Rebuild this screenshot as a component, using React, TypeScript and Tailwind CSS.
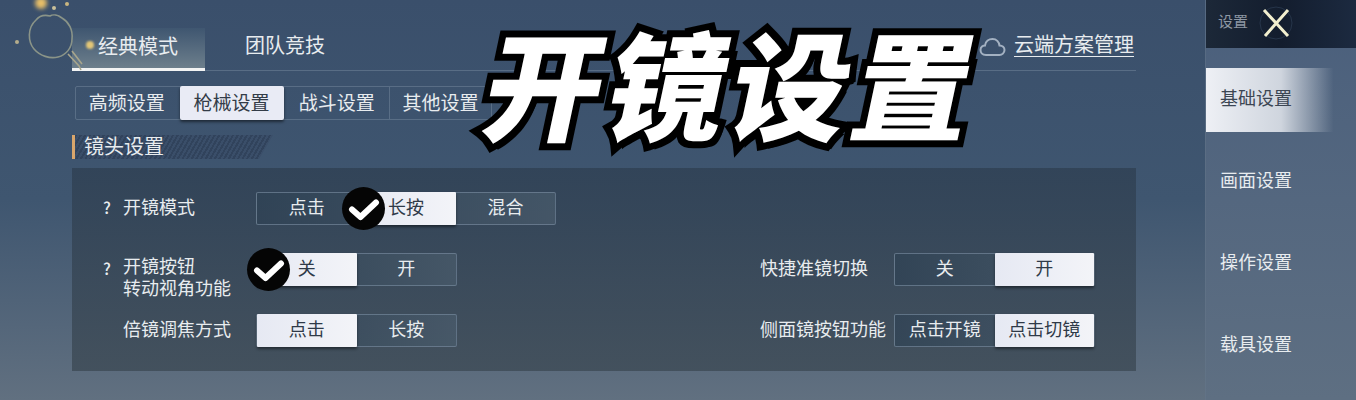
import React from "react";

const font = { fontFamily: '"Noto Sans CJK SC", "Noto Sans", sans-serif' };

function Seg({ items, active, w = 99.5 }: { items: string[]; active: number; w?: number }) {
  return (
    <div className="flex h-[33px] rounded-[2px] border border-[#73869a]/70 bg-gradient-to-r from-[#2f4254]/70 to-[#4a5c6c]/70">
      {items.map((t, i) => (
        <div
          key={t}
          style={{ width: w }}
          className={
            "flex items-center justify-center pb-[5px] text-[18px] leading-none " +
            (i === active
              ? "-my-px bg-gradient-to-r from-[#e6e9f3] to-[#f3f4f8] text-[#2f3a48] rounded-[1px] shadow-[0_2px_3px_rgba(0,0,0,0.45)]"
              : "text-[#e8ecef]")
          }
        >
          {t}
        </div>
      ))}
    </div>
  );
}

function Check({ className }: { className: string }) {
  return (
    <div className={"absolute flex h-[43px] w-[43px] items-center justify-center rounded-full bg-[#050505] " + className}>
      <svg width="32" height="32" viewBox="0 0 32 32" fill="none">
        <path d="M4 16.5 L12.5 24 L28 9.5" stroke="#fff" strokeWidth="6" strokeLinejoin="round" strokeLinecap="round" />
      </svg>
    </div>
  );
}

function Dot({ className }: { className: string }) {
  return <div className={"absolute rounded-full " + className} />;
}

function Help() {
  return <span className="w-[51px] pb-[3px] pl-[31px] text-[16px] font-medium">?</span>;
}

export default function App() {
  return (
    <div
      style={font}
      className="relative flex h-[400px] w-[1356px] overflow-hidden bg-gradient-to-b from-[#3a4f6b] via-[#3f5670] to-[#617080]"
    >
      {/* magnifier decoration and sparkles */}
      <svg className="absolute left-[26px] top-[12px] z-10" width="60" height="62" viewBox="0 0 60 62" fill="none">
        <path
          d="M10 8 C14 3 20 3 24 4 C27 2 32 3 36 6 C43 10 47 18 46 27 C46 36 40 43 32 45 C24 47 14 44 8 37 C2 30 1 16 10 8 Z"
          stroke="#8a9488"
          strokeWidth="1.6"
        />
        <path d="M42 42 L53 54 L55 58 M46 39 L56 52" stroke="#a8a58c" strokeWidth="1.6" />
      </svg>
      <Dot className="left-[35px] top-[-3px] h-[12px] w-[12px] bg-[#e8bf68] blur-[2px]" />
      <Dot className="left-[52px] top-[6px] h-[4px] w-[4px] bg-[#c9c09a] blur-[0.5px]" />
      <Dot className="left-[65px] top-[2px] h-[4px] w-[4px] bg-[#c9b680] blur-[0.5px]" />
      <Dot className="left-[15px] top-[40px] h-[4px] w-[4px] bg-[#b5ad8c] blur-[0.5px]" />
      <Dot className="left-[86px] top-[41px] z-10 h-[8px] w-[8px] bg-[#e2c677] blur-[1px]" />

      {/* main */}
      <main className="flex h-full w-[1205px] flex-col pl-[72px] pr-[69px] text-[#e8ecef]">
        <div className="mt-[28px] flex h-[43px] items-start border-b border-[#6d8096]/60">
          <div className="flex h-[43px] w-[133px] items-center border-b-[3px] border-[#f2f3f3] bg-gradient-to-b from-[#3f5670] to-[#6d7f8c] pb-[5px] pl-[26px] text-[20px] leading-none">
            经典模式
          </div>
          <div className="ml-[40px] flex h-[40px] items-center pb-[6px] text-[20px] leading-none">团队竞技</div>
          <div className="ml-auto mr-[2px] flex h-[36px] items-center gap-[8px]">
            <svg width="27" height="20" viewBox="0 0 27 20" fill="none" className="mt-[1px]">
              <path
                d="M7 18 C3 18 1.5 15 1.5 13 C1.5 10 4 8.5 6 8.5 C6.5 4 10 2 13.5 2 C17.5 2 20 5 20.5 8.5 C23.5 8.5 25.5 10.5 25.5 13 C25.5 16 23 18 20.5 18 Z"
                stroke="#a3b1c2"
                strokeWidth="2"
              />
            </svg>
            <span className="-mt-[3px] h-[24px] border-b border-[#e8ecef] text-[20px] leading-[21px]">云端方案管理</span>
          </div>
        </div>

        <div className="ml-[3px] mt-[15px] flex h-[34px] w-[417px] rounded-[2px] border border-[#6d8096]/60 text-[19px] leading-none">
          {["高频设置", "枪械设置", "战斗设置", "其他设置"].map((t, i) => (
            <div
              key={t}
              className={
                "flex items-center justify-center pb-[4px] " +
                (i === 0
                  ? "w-[104px] pr-[2px]"
                  : i === 1
                    ? "-my-px w-[104px] bg-[#e9ebf5] text-[#333c48] rounded-[2px] shadow-[0_2px_3px_rgba(0,0,0,0.5)]"
                    : i === 2
                      ? "w-[106px] pl-[1px]"
                      : "w-[102px] border-l border-[#6d8096]/60")
              }
            >
              {t}
            </div>
          ))}
        </div>

        <div className="mt-[15px] flex h-[24px] w-[201px] items-center border-l-[3px] border-[#d9a66c] bg-[repeating-linear-gradient(120deg,#31435c_0px,#31435c_2px,#3a4e69_2px,#3a4e69_4px)] pb-[2px] pl-[9px] text-[20px] leading-none [clip-path:polygon(0_0,100%_0,calc(100%-14px)_100%,0_100%)]">
          镜头设置
        </div>

        <section className="mt-[9px] flex h-[203px] flex-col gap-[28px] bg-gradient-to-b from-[#2f4053]/80 to-[#3d4a55]/80 pt-[24px] text-[18px] leading-none">
          <div className="flex h-[33px] items-center">
            <Help />
            <span className="w-[133px] pb-[5px]">开镜模式</span>
            <Seg items={["点击", "长按", "混合"]} active={1} w={99.4} />
          </div>
          <div className="flex h-[33px] items-center">
            <div className="flex w-[688px] items-center">
              <Help />
              <span className="mt-[12px] w-[133px] leading-[22px]">
                开镜按钮
                <br />
                转动视角功能
              </span>
              <Seg items={["关", "开"]} active={0} />
            </div>
            <span className="w-[134px] pb-[5px]">快捷准镜切换</span>
            <Seg items={["关", "开"]} active={1} />
          </div>
          <div className="flex h-[33px] items-center">
            <div className="flex w-[688px] items-center">
              <span className="w-[51px]" />
              <span className="w-[133px] pb-[5px]">倍镜调焦方式</span>
              <Seg items={["点击", "长按"]} active={0} />
            </div>
            <span className="w-[134px] pb-[5px]">侧面镜按钮功能</span>
            <Seg items={["点击开镜", "点击切镜"]} active={1} />
          </div>
        </section>
      </main>

      {/* sidebar */}
      <aside className="flex h-full w-[151px] flex-col border-l border-[#6a7a8c]/40 bg-gradient-to-b from-[#4a5f7c] to-[#5e6f82] text-[18px] leading-none text-[#e8ecef]">
        <div className="flex h-[48px] items-center bg-gradient-to-r from-[#1c2838] via-[#131d2e] to-[#1c2a40] pl-[12px]">
          <span className="pb-[8px] text-[15px] text-[#8d97a3]">设置</span>
          <svg className="mb-[3px] ml-[11px]" width="34" height="34" viewBox="0 0 34 34" fill="none">
            <circle cx="17" cy="17" r="16" stroke="#26354a" strokeWidth="1" />
            <path d="M5 4 L29 30 M29 4 L6 30" stroke="#f2efcf" strokeWidth="3" />
          </svg>
        </div>
        <div className="mt-[20px] flex h-[64px] items-center bg-gradient-to-r from-[#eef0f5] via-[#cfd5de] via-50% to-transparent to-85% pb-[6px] pl-[14px] text-[#3c4653]">
          基础设置
        </div>
        <div className="mt-[18px] flex h-[64px] items-center pb-[6px] pl-[14px]">画面设置</div>
        <div className="mt-[18px] flex h-[64px] items-center pb-[6px] pl-[14px]">操作设置</div>
        <div className="mt-[18px] flex h-[64px] items-center pb-[6px] pl-[14px]">载具设置</div>
      </aside>

      {/* overlays */}
      <Check className="left-[342px] top-[187px]" />
      <Check className="left-[247px] top-[248px]" />
      <div className="pointer-events-none absolute left-[488px] top-[6px] skew-x-[-12deg] whitespace-nowrap pr-[20px] text-[118px] font-black leading-[150px] tracking-[5px] text-white [-webkit-text-stroke:14px_#000] [paint-order:stroke_fill] [text-shadow:6px_6px_0_#000]">
        开镜设置
      </div>
    </div>
  );
}
